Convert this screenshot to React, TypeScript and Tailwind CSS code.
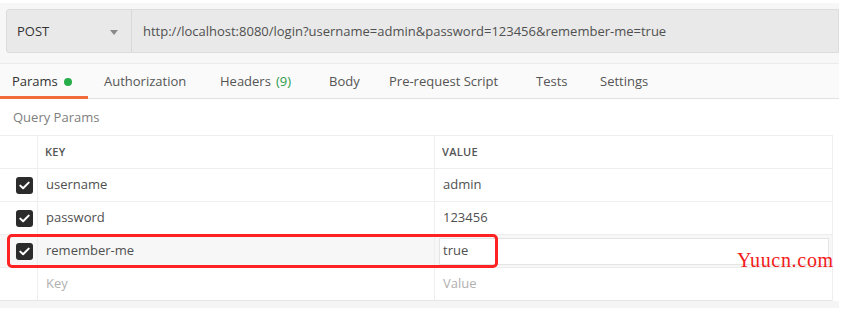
import React from 'react'

const font = { fontFamily: '"Open Sans", "Liberation Sans", sans-serif' }

function Check() {
  return (
    <div className="w-[17px] h-[17px] rounded-[3px] bg-[#2b2b2b] flex items-center justify-center">
      <svg width="11" height="9" viewBox="0 0 11 9" fill="none">
        <path d="M1.3 4.6 L4.1 7.3 L9.7 1.6" stroke="white" strokeWidth="2" strokeLinecap="round" strokeLinejoin="round" />
      </svg>
    </div>
  )
}

export default function App() {
  const tabs = [
    { label: 'Authorization', w: 'w-[116px]' },
    { label: 'Headers', extra: '(9)', w: 'w-[109px]' },
    { label: 'Body', w: 'w-[60px]' },
    { label: 'Pre-request Script', w: 'w-[147px]' },
    { label: 'Tests', w: 'w-[64px]' },
    { label: 'Settings', w: 'w-[80px]' },
  ]
  const rows = [
    { k: 'username', v: 'admin' },
    { k: 'password', v: '123456' },
  ]

  return (
    <div className="relative w-[846px] h-[315px] bg-white overflow-hidden text-[#505050]" style={font}>
      {/* request bar + tabs */}
      <div className="mt-[3px] w-[839px] bg-[#f7f7f7] pt-[6px]">
        <div className="ml-[6px] w-[833px] h-[44px] flex bg-[#e9e9e9] border border-[#dcdcdc] rounded-l-[3px] pt-[2px]">
          <div className="w-[125px] flex items-center justify-between pl-[10px] pr-[13px] border-r border-[#d8d8d8] -mt-[2px] pt-[2px]">
            <span className="text-[13px] text-[#333]">POST</span>
            <svg width="8" height="5" viewBox="0 0 8 5"><path d="M0 0 L8 0 L4 5 Z" fill="#8a8a8a" /></svg>
          </div>
          <div className="flex items-center pl-[11px] text-[13px] text-[#505050]">
            http://localhost:8080/login?username=admin&amp;password=123456&amp;remember-me=true
          </div>
        </div>
        <div className="mt-[10px] h-[36px] bg-[#fafafa] border-t border-[#ebebeb] border-b border-b-[#e2e2e2] flex items-stretch text-[13px]">
          <div className="relative w-[88px] flex items-center pl-[12px] pt-[2px] text-[#333]">
            Params
            <span className="ml-[6px] w-[8px] h-[8px] rounded-full bg-[#27ae4b]" />
            <span className="absolute left-0 right-0 bottom-[-1px] h-[3px] bg-[#f26b3a]" />
          </div>
          <div className="flex items-center pl-[16px] pt-[2px]">
            {tabs.map((t) => (
              <span key={t.label} className={`${t.w} text-[#555] whitespace-nowrap`}>
                {t.label}
                {t.extra && <span className="ml-[5px] text-[#2e9c4a]">{t.extra}</span>}
              </span>
            ))}
          </div>
        </div>
      </div>

      {/* query params */}
      <div className="h-[36px] flex items-center pl-[13px] pt-[2px] text-[13px] text-[#808080]">Query Params</div>
      <div className="w-[833px] border-t border-[#eeeeee] border-r">
        <div className="grid grid-cols-[38px_397px_398px] h-[33px] border-b border-[#eeeeee] text-[11px] font-semibold text-[#555] tracking-[0.3px]">
          <div className="border-r border-[#eeeeee]" />
          <div className="flex items-center pl-[7px] border-r border-[#eeeeee]">KEY</div>
          <div className="flex items-center pl-[7px]">VALUE</div>
        </div>
        {rows.map((r) => (
          <div key={r.k} className="grid grid-cols-[38px_397px_398px] h-[33px] border-b border-[#eeeeee] text-[13px]">
            <div className="flex items-center pl-[16px] border-r border-[#eeeeee]"><Check /></div>
            <div className="flex items-center pl-[8px] border-r border-[#eeeeee]">{r.k}</div>
            <div className="flex items-center pl-[8px]">{r.v}</div>
          </div>
        ))}
        <div className="grid grid-cols-[38px_397px_398px] h-[33px] border-b border-[#eeeeee] text-[13px] bg-[#f7f7f7]">
          <div className="flex items-center pl-[16px] border-r border-[#eeeeee]"><Check /></div>
          <div className="flex items-center pl-[8px] border-r border-[#eeeeee]">remember-me</div>
          <div className="flex items-center pl-[4px] pr-[4px]">
            <div className="w-full h-[27px] bg-white border border-[#e4e4e4] flex items-center pl-[3px]">true</div>
          </div>
        </div>
        <div className="grid grid-cols-[38px_397px_398px] h-[33px] border-b border-[#e6e6e6] text-[13px] text-[#b0b0b0]">
          <div className="border-r border-[#eeeeee]" />
          <div className="flex items-center pl-[8px] border-r border-[#eeeeee]">Key</div>
          <div className="flex items-center pl-[8px]">Value</div>
        </div>
      </div>
      <div className="w-[839px] h-[7px] bg-[#f5f5f5]" />

      {/* highlight + watermark */}
      <div className="absolute left-[7px] top-[234px] w-[491px] h-[34px] border-[3px] border-[#f22] rounded-[5px]" />
      <div
        className="absolute left-[737px] top-[250px] text-[20px] tracking-[0.7px] text-[#f21a1a] leading-none"
        style={{ fontFamily: '"Liberation Serif", serif' }}
      >
        Yuucn.com
      </div>
    </div>
  )
}
